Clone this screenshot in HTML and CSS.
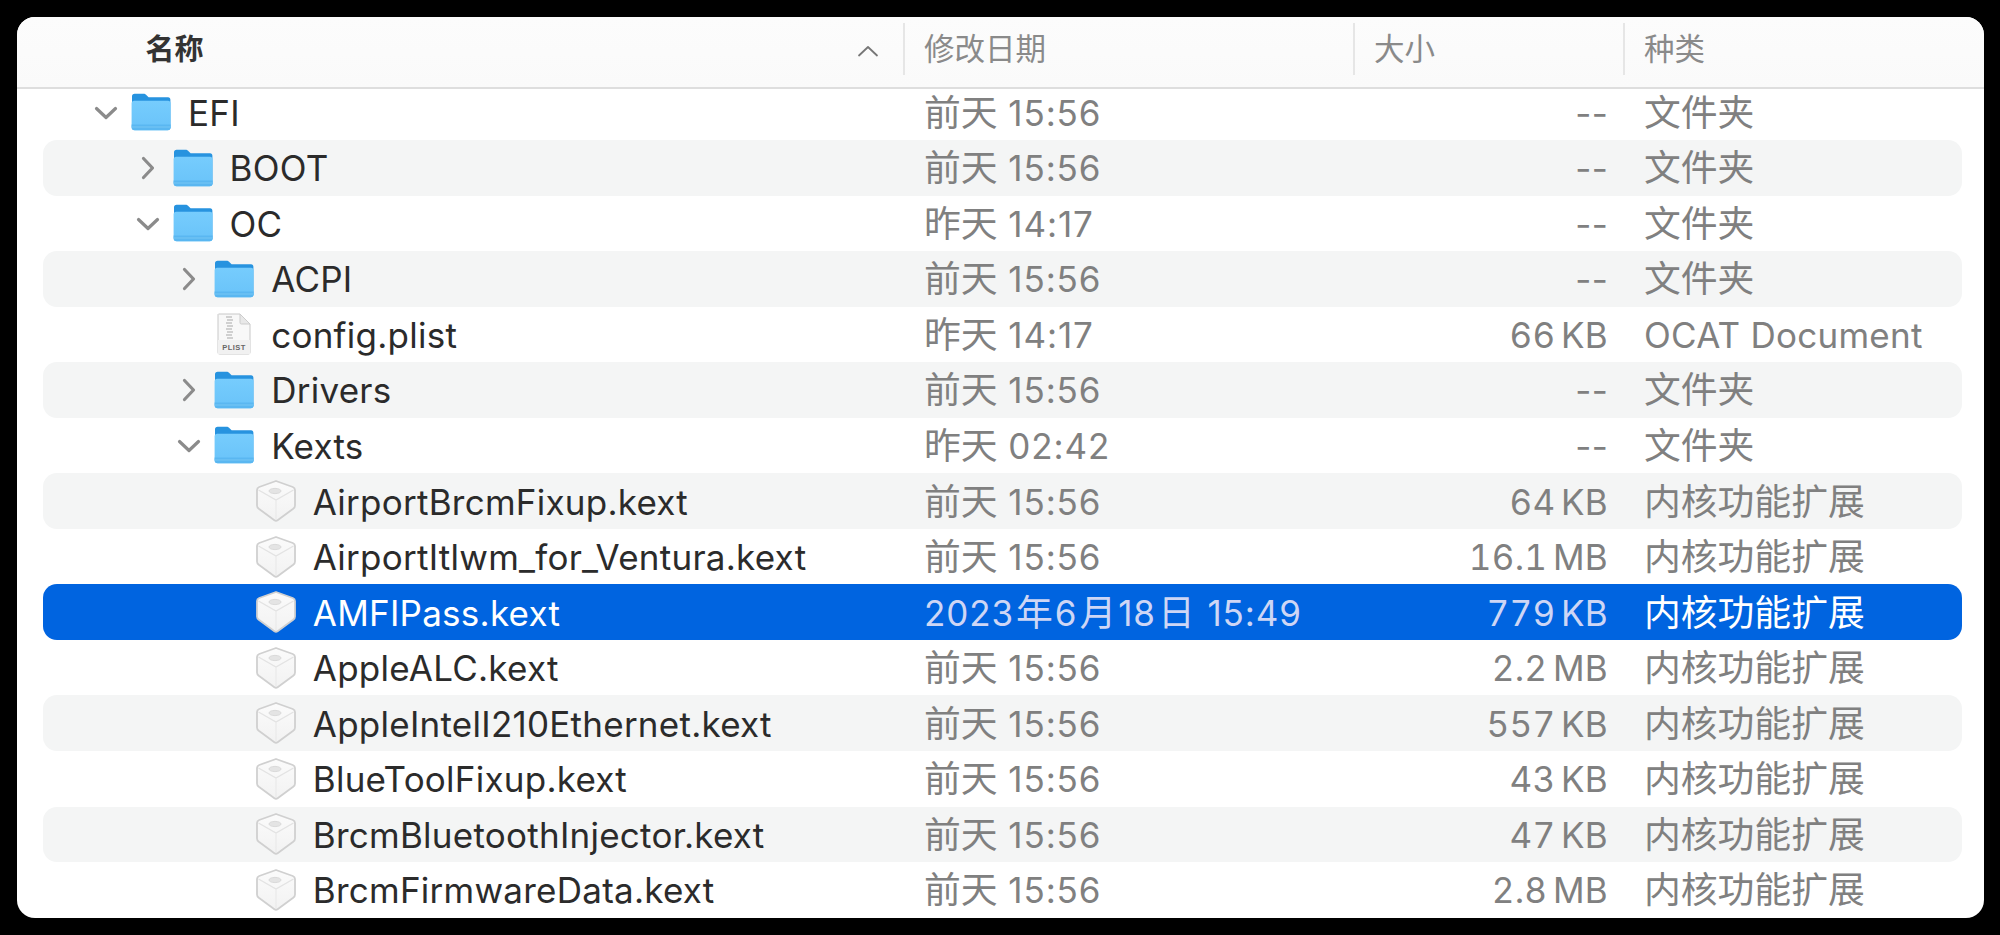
FILE: index.html
```html
<!doctype html>
<html>
<head>
<meta charset="utf-8">
<title>Finder</title>
<link rel="stylesheet" href="styles.css">
</head>
<body>
<svg class="defs" width="0" height="0">
	<defs>
		<linearGradient id="fbody" x1="0" y1="0" x2="0" y2="1">
			<stop offset="0" stop-color="#76ccfd"/>
			<stop offset="1" stop-color="#69c3f9"/>
		</linearGradient>
		<linearGradient id="kface" x1="0" y1="0" x2="0" y2="1">
			<stop offset="0" stop-color="#fbfbfb"/>
			<stop offset="1" stop-color="#f2f2f2"/>
		</linearGradient>
		<symbol id="folder" viewBox="0 0 40 38">
			<path d="M1 35V3.5C1 1.8 2 .8 3.6 .8H12.5C14 .8 14.8 1.4 15.8 2.4L17.6 4.2H37C38.6 4.2 39.4 5.2 39.4 6.8V35Z" fill="#2793df"/>
			<path d="M.6 10.4C.6 8.6 1.6 7.8 3.2 7.8H37C38.6 7.8 39.6 8.6 39.6 10.4V34C39.6 36.2 38.6 37.2 36.6 37.2H3.6C1.6 37.2 .6 36.2 .6 34Z" fill="url(#fbody)"/>
			<path d="M.6 31.4H39.6V34C39.6 36.2 38.6 37.2 36.6 37.2H3.6C1.6 37.2 .6 36.2 .6 34Z" fill="#5ab7f1"/>
			<path d="M.6 34H39.6" stroke="#7ecbf7" stroke-width=".8"/>
		</symbol>
		<symbol id="kext" viewBox="0 0 40 42">
			<path d="M20 1 36.8 7C38.2 7.6 39 8.4 39 10V25.4C39 26.8 38.4 27.8 37.2 28.8L21.6 40.2C20.6 40.9 19.4 40.9 18.4 40.2L2.8 28.8C1.6 27.8 1 26.8 1 25.4V10C1 8.4 1.8 7.6 3.2 7Z" fill="url(#kface)" stroke="#d0d0d0" stroke-width="1.8" stroke-linejoin="round"/>
			<path d="M2.5 10 20 20 37.5 10" fill="none" stroke="#e3e3e3" stroke-width="1.4"/>
			<path d="M20 20V39" stroke="#e9e9e9" stroke-width="1.2"/>
			<ellipse cx="19" cy="11" rx="6" ry="2.6" fill="#e4e4e4" stroke="#dadada"/>
		</symbol>
		<symbol id="plist" viewBox="0 0 34 42">
			<path d="M1.5 1H23L33 11V39.5C33 40.6 32.4 41 31.4 41H2.6C1.6 41 1 40.6 1 39.5V1.5Z" fill="#f8f8f8" stroke="#c8c8c8"/>
			<path d="M23 1V9.5C23 10.5 23.6 11 24.5 11H33Z" fill="#e8e8e8" stroke="#cccccc"/>
			<path d="M9 4H15M10 7H16M9 10H15M10 13H16M9 16H15M10 19H16M9 22H15M10 25H16" stroke="#a8a8a8" stroke-width="1.2"/>
			<rect x="1" y="27" width="32" height="14" fill="#f1f1f1"/>
			<text x="17" y="37" text-anchor="middle" class="plist-label">PLIST</text>
		</symbol>
		<symbol id="open" viewBox="0 0 24 14">
			<path d="M2.5 2.5 12 11.5 21.5 2.5" fill="none" stroke="#8b8b8b" stroke-width="3.2" stroke-linecap="round" stroke-linejoin="round"/>
		</symbol>
		<symbol id="closed" viewBox="0 0 14 24">
			<path d="M2.5 2.5 11.5 12 2.5 21.5" fill="none" stroke="#8b8b8b" stroke-width="3.2" stroke-linecap="round" stroke-linejoin="round"/>
		</symbol>
	</defs>
</svg>

<div class="win">
	<div class="head">
		<div class="hcell hname">
			<span class="hname-txt">名称</span>
			<svg class="sort" viewBox="0 0 22 12"><path d="M2 10.5 11 2 20 10.5" fill="none" stroke="#777" stroke-width="1.8" stroke-linecap="round" stroke-linejoin="round"/></svg>
		</div>
		<div class="hcell hdate">修改日期</div>
		<div class="hcell hsize">大小</div>
		<div class="hcell hkind">种类</div>
	</div>
	<div class="list">
		<div class="row">
			<div class="name d0"><svg class="arr"><use href="#open"/></svg><svg class="ico"><use href="#folder"/></svg><span>EFI</span></div>
			<div class="date"><i>前天</i> 15:56</div><div class="size none">--</div><div class="kind"><i>文件夹</i></div>
		</div>
		<div class="row alt">
			<div class="name d1"><svg class="arr"><use href="#closed"/></svg><svg class="ico"><use href="#folder"/></svg><span>BOOT</span></div>
			<div class="date"><i>前天</i> 15:56</div><div class="size none">--</div><div class="kind"><i>文件夹</i></div>
		</div>
		<div class="row">
			<div class="name d1"><svg class="arr"><use href="#open"/></svg><svg class="ico"><use href="#folder"/></svg><span>OC</span></div>
			<div class="date"><i>昨天</i> 14:17</div><div class="size none">--</div><div class="kind"><i>文件夹</i></div>
		</div>
		<div class="row alt">
			<div class="name d2"><svg class="arr"><use href="#closed"/></svg><svg class="ico"><use href="#folder"/></svg><span>ACPI</span></div>
			<div class="date"><i>前天</i> 15:56</div><div class="size none">--</div><div class="kind"><i>文件夹</i></div>
		</div>
		<div class="row">
			<div class="name d2"><svg class="arr"></svg><svg class="ico tall"><use href="#plist"/></svg><span>config.plist</span></div>
			<div class="date"><i>昨天</i> 14:17</div><div class="size">66 KB</div><div class="kind">OCAT Document</div>
		</div>
		<div class="row alt">
			<div class="name d2"><svg class="arr"><use href="#closed"/></svg><svg class="ico"><use href="#folder"/></svg><span>Drivers</span></div>
			<div class="date"><i>前天</i> 15:56</div><div class="size none">--</div><div class="kind"><i>文件夹</i></div>
		</div>
		<div class="row">
			<div class="name d2"><svg class="arr"><use href="#open"/></svg><svg class="ico"><use href="#folder"/></svg><span>Kexts</span></div>
			<div class="date"><i>昨天</i> 02:42</div><div class="size none">--</div><div class="kind"><i>文件夹</i></div>
		</div>
		<div class="row alt">
			<div class="name d3"><svg class="arr"></svg><svg class="ico tall"><use href="#kext"/></svg><span>AirportBrcmFixup.kext</span></div>
			<div class="date"><i>前天</i> 15:56</div><div class="size">64 KB</div><div class="kind"><i>内核功能扩展</i></div>
		</div>
		<div class="row">
			<div class="name d3"><svg class="arr"></svg><svg class="ico tall"><use href="#kext"/></svg><span>AirportItlwm_for_Ventura.kext</span></div>
			<div class="date"><i>前天</i> 15:56</div><div class="size">16.1 MB</div><div class="kind"><i>内核功能扩展</i></div>
		</div>
		<div class="row sel">
			<div class="name d3"><svg class="arr"></svg><svg class="ico tall"><use href="#kext"/></svg><span>AMFIPass.kext</span></div>
			<div class="date">2023<i>年</i>6<i>月</i>18<i>日</i> 15:49</div><div class="size">779 KB</div><div class="kind"><i>内核功能扩展</i></div>
		</div>
		<div class="row">
			<div class="name d3"><svg class="arr"></svg><svg class="ico tall"><use href="#kext"/></svg><span>AppleALC.kext</span></div>
			<div class="date"><i>前天</i> 15:56</div><div class="size">2.2 MB</div><div class="kind"><i>内核功能扩展</i></div>
		</div>
		<div class="row alt">
			<div class="name d3"><svg class="arr"></svg><svg class="ico tall"><use href="#kext"/></svg><span>AppleIntelI210Ethernet.kext</span></div>
			<div class="date"><i>前天</i> 15:56</div><div class="size">557 KB</div><div class="kind"><i>内核功能扩展</i></div>
		</div>
		<div class="row">
			<div class="name d3"><svg class="arr"></svg><svg class="ico tall"><use href="#kext"/></svg><span>BlueToolFixup.kext</span></div>
			<div class="date"><i>前天</i> 15:56</div><div class="size">43 KB</div><div class="kind"><i>内核功能扩展</i></div>
		</div>
		<div class="row alt">
			<div class="name d3"><svg class="arr"></svg><svg class="ico tall"><use href="#kext"/></svg><span>BrcmBluetoothInjector.kext</span></div>
			<div class="date"><i>前天</i> 15:56</div><div class="size">47 KB</div><div class="kind"><i>内核功能扩展</i></div>
		</div>
		<div class="row">
			<div class="name d3"><svg class="arr"></svg><svg class="ico tall"><use href="#kext"/></svg><span>BrcmFirmwareData.kext</span></div>
			<div class="date"><i>前天</i> 15:56</div><div class="size">2.8 MB</div><div class="kind"><i>内核功能扩展</i></div>
		</div>
	</div>
</div>
</body>
</html>
```

FILE: styles.css
```css
html,body{margin:0;padding:0;height:100%;background:#000;overflow:hidden;}
body{padding:17px 16px 17px 17px;box-sizing:border-box;font-family:Inter,"Noto Sans CJK SC",sans-serif;}
.defs{position:absolute;}
.plist-label{font:bold 7.5px "Liberation Sans",sans-serif;fill:#666;letter-spacing:.4px;}

.win{height:901px;background:#fff;border-radius:18px;overflow:hidden;}

.head{position:relative;z-index:1;height:72px;box-sizing:border-box;padding:6px 22px 0 25.6px;display:grid;grid-template-columns:860.4px 450px 270px 1fr;background:linear-gradient(#fcfcfc,#fafafa);border-bottom:2px solid #dedede;}
.hcell{height:52px;line-height:48px;font-size:30.5px;color:#8a8a8a;font-family:"Noto Sans CJK SC",sans-serif;box-sizing:border-box;padding-left:19px;border-left:2px solid #e6e6e6;}
.hname{border-left:0;padding-left:103px;padding-right:24px;display:flex;justify-content:space-between;align-items:center;color:#333;font-weight:700;}
.hname-txt{line-height:44px;font-size:29px;margin-bottom:4px;}
.sort{width:22px;height:12px;margin-top:4px;}

.list{margin-top:-4.6px;padding:0 22px 0 25.6px;}
.row{height:55.56px;box-sizing:border-box;padding-top:1px;display:grid;grid-template-columns:860.4px 450px 270px 1fr;align-items:center;border-radius:14px;font-size:35px;line-height:40px;letter-spacing:.25px;color:#808080;white-space:nowrap;position:relative;z-index:2;}
.row.alt{background:#f4f5f5;}
.row.sel{background:#0064e0;color:#ced6f5;}
.row i{font-style:normal;font-family:"Noto Sans CJK SC",sans-serif;font-size:36.8px;line-height:0;letter-spacing:0;}
.sel .date i{margin:0 2px;}

.name{display:flex;align-items:center;color:#2b2b2b;}
.sel .name,.sel .kind{color:#fff;}
.d0{padding-left:51.4px;}
.d1{padding-left:93px;}
.d2{padding-left:134.6px;}
.d3{padding-left:176.2px;}
.arr{width:24px;height:24px;flex:none;}
.ico{width:40px;height:40px;margin:-1px 17px 0 13px;flex:none;}
.ico.tall{height:42px;}

.date{padding-left:21px;letter-spacing:.9px;}
.size{text-align:right;padding-right:15px;font-variant-numeric:tabular-nums;word-spacing:-4px;}
.size.none{font-variant-numeric:normal;}
.kind{padding-left:21px;}
```
